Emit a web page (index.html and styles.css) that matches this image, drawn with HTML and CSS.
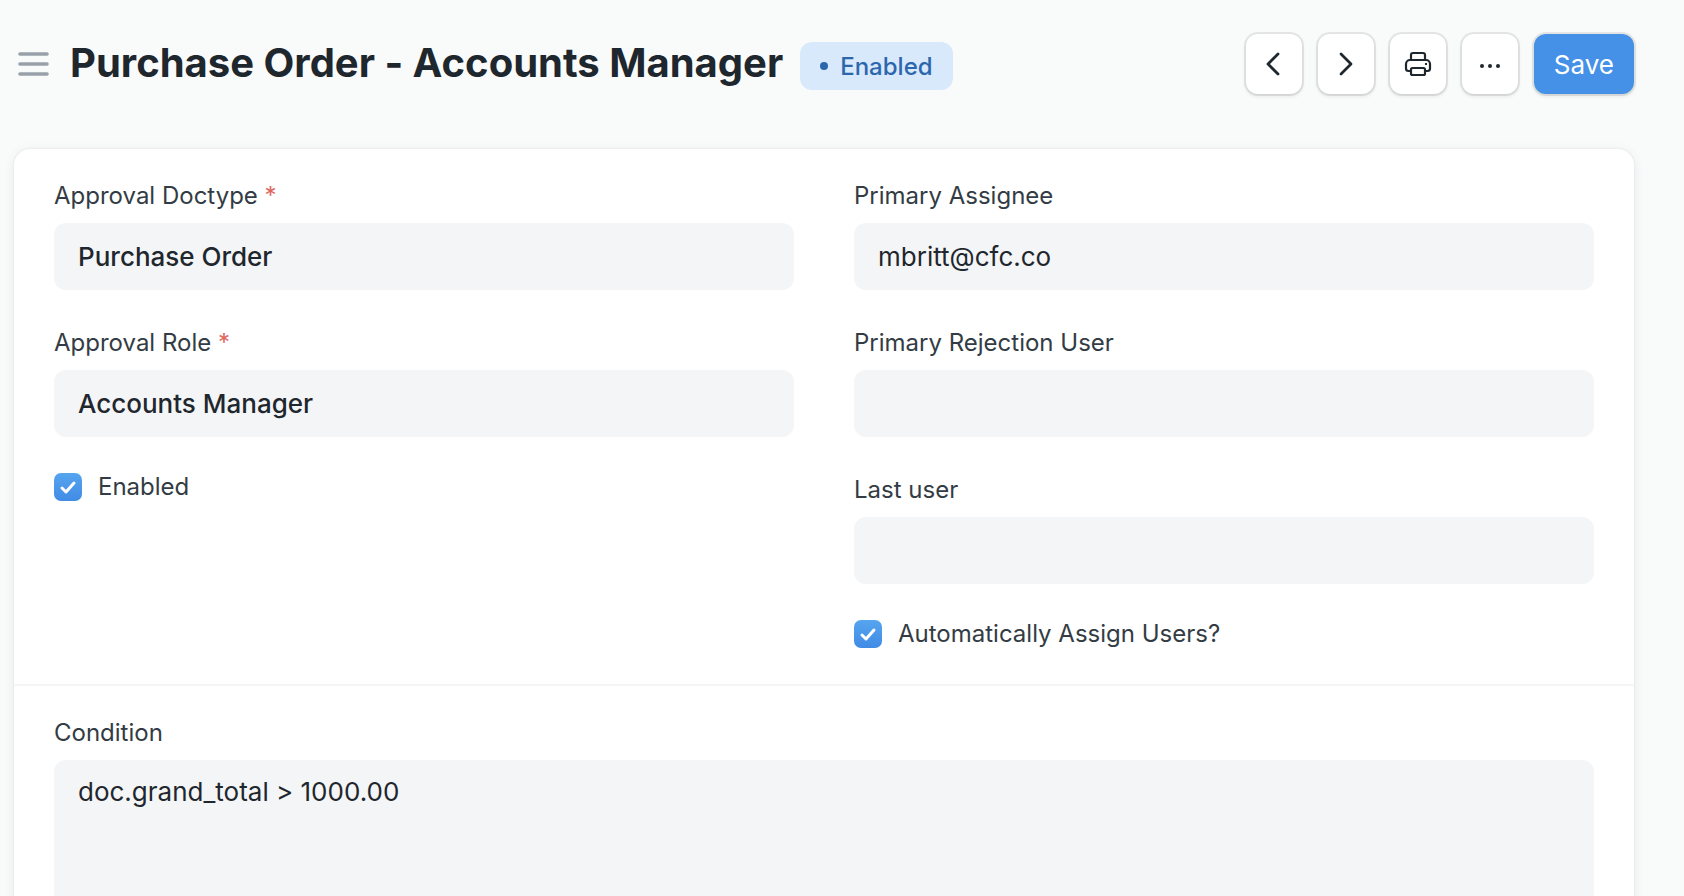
FILE: index.html
```html
<!DOCTYPE html>
<html lang="en">
<head>
<meta charset="utf-8">
<meta name="viewport" content="width=device-width, initial-scale=1">
<title>Purchase Order - Accounts Manager</title>
<link rel="stylesheet" href="styles.css">
</head>
<body>
<header class="page-head">
  <button class="menu-toggle" type="button" aria-label="Toggle sidebar">
    <svg width="31" height="24" viewBox="0 0 31 24" fill="none" stroke="currentColor" stroke-width="3.600" stroke-linecap="round"><path d="M2 2h27M2 12h27M2 22h27"/></svg>
  </button>
  <h1 class="title">Purchase Order - Accounts Manager</h1>
  <span class="badge">Enabled</span>
  <div class="actions">
    <button class="btn" type="button" aria-label="Previous">
      <svg width="32" height="32" viewBox="0 0 32 32" fill="none" stroke="currentColor" stroke-width="2.800" stroke-linecap="round" stroke-linejoin="round"><path d="M20 6L10 16l10 10"/></svg>
    </button>
    <button class="btn" type="button" aria-label="Next">
      <svg width="32" height="32" viewBox="0 0 32 32" fill="none" stroke="currentColor" stroke-width="2.800" stroke-linecap="round" stroke-linejoin="round"><path d="M11 6l10 10-10 10"/></svg>
    </button>
    <button class="btn" type="button" aria-label="Print">
      <svg width="32" height="32" viewBox="0 0 32 32" fill="none" stroke="currentColor" stroke-width="2.200" stroke-linejoin="round"><path d="M9 12V7a2 2 0 0 1 2-2h10a2 2 0 0 1 2 2v5"/><path d="M9 23H6.500a2.500 2.500 0 0 1-2.500-2.500V16a4 4 0 0 1 4-4h16a4 4 0 0 1 4 4v4.500a2.500 2.500 0 0 1-2.500 2.500H23"/><rect x="9" y="20" width="14" height="7" rx="1.500"/><path d="M23 16h2"/></svg>
    </button>
    <button class="btn" type="button" aria-label="More options">
      <svg width="32" height="32" viewBox="0 0 32 32" fill="currentColor"><circle cx="8" cy="18" r="2"/><circle cx="16" cy="18" r="2"/><circle cx="24" cy="18" r="2"/></svg>
    </button>
    <button class="btn btn-primary" type="button">Save</button>
  </div>
</header>
<main>
  <form class="card">
    <section class="section columns">
      <div class="column">
        <div class="field">
          <label class="label" for="doctype">Approval Doctype <span class="required">*</span></label>
          <input class="control strong" id="doctype" type="text" value="Purchase Order">
        </div>
        <div class="field">
          <label class="label" for="role">Approval Role <span class="required">*</span></label>
          <input class="control strong" id="role" type="text" value="Accounts Manager">
        </div>
        <label class="check"><input class="tick" type="checkbox" checked>Enabled</label>
      </div>
      <div class="column">
        <div class="field">
          <label class="label" for="assignee">Primary Assignee</label>
          <input class="control" id="assignee" type="text" value="mbritt@cfc.co">
        </div>
        <div class="field">
          <label class="label" for="rejection">Primary Rejection User</label>
          <input class="control" id="rejection" type="text">
        </div>
        <div class="field">
          <label class="label" for="last-user">Last user</label>
          <input class="control" id="last-user" type="text">
        </div>
        <label class="check"><input class="tick" type="checkbox" checked>Automatically Assign Users?</label>
      </div>
    </section>
    <section class="section">
      <div class="field">
        <label class="label" for="condition">Condition</label>
        <textarea class="control area" id="condition" spellcheck="false">doc.grand_total &gt; 1000.00</textarea>
      </div>
    </section>
  </form>
</main>
</body>
</html>
```
FILE: styles.css
```css
* {
  box-sizing: border-box;
}

body {
  margin: 0;
  height: 100vh;
  overflow: hidden;
  background: #f9fafa;
  color: #1f272e;
  font-family: Inter, "Liberation Sans", sans-serif;
  font-variant-ligatures: no-common-ligatures no-contextual;
}

button,
input,
textarea {
  font: inherit;
  font-variant-ligatures: inherit;
  color: inherit;
}

.page-head {
  display: flex;
  align-items: center;
  padding: 34px 50px 55px 18px;
}

.menu-toggle {
  display: flex;
  margin-right: 21px;
  padding: 0;
  border: 0;
  background: none;
  color: #98a1a9;
}

.title {
  margin: 0;
  padding-bottom: 2px;
  font-size: 40px;
  font-weight: 700;
  line-height: 56px;
  white-space: nowrap;
}

.badge {
  display: flex;
  align-items: center;
  gap: 12px;
  height: 48px;
  margin: 4px 0 0 17px;
  padding: 0 20px;
  border-radius: 12px;
  background: #d8e9fc;
  color: #2c67ad;
  font-size: 24px;
  font-weight: 500;
}

.badge::before {
  content: "";
  width: 8px;
  height: 8px;
  border-radius: 50%;
  background: currentColor;
}

.actions {
  display: flex;
  gap: 16px;
  margin-left: auto;
}

.btn {
  display: flex;
  align-items: center;
  justify-content: center;
  min-width: 56px;
  height: 60px;
  padding: 0 12px;
  border: 0;
  border-radius: 12px;
  background: #fff;
  box-shadow: 0 0 0 2px rgba(0, 0, 0, 0.08), 0 2px 4px rgba(0, 0, 0, 0.1);
}

.btn-primary {
  padding: 0 20px;
  background: #4491e7;
  color: #fff;
  font-size: 26px;
}

.card {
  margin: 0 50px 0 14px;
  border-radius: 16px;
  background: #fff;
  box-shadow: 0 0 2px rgba(0, 0, 0, 0.1), 0 2px 12px rgba(17, 43, 66, 0.08);
}

.section {
  padding: 29px 40px 35px;
}

.section + .section {
  border-top: 2px solid #f4f5f6;
}

.columns {
  display: grid;
  grid-template-columns: 1fr 1fr;
  gap: 60px;
}

.column {
  display: flex;
  flex-direction: column;
  gap: 35px;
}

.field {
  display: flex;
  flex-direction: column;
  gap: 9px;
}

.label,
.check {
  color: #333c44;
  font-size: 24px;
}

.label {
  line-height: 36px;
}

.required {
  color: #e0655c;
}

.control {
  width: 100%;
  height: 67px;
  padding: 0 24px;
  border: 0;
  border-radius: 12px;
  background: #f4f5f6;
  font-size: 26px;
  outline: 0;
}

.strong {
  font-weight: 500;
}

.area {
  height: 600px;
  padding: 12px 24px;
  line-height: 39px;
  resize: none;
}

.check {
  display: flex;
  align-items: center;
  align-self: flex-start;
  gap: 16px;
  line-height: 30px;
}

.tick {
  appearance: none;
  width: 28px;
  height: 28px;
  margin: 0;
  border-radius: 7px;
  background:
    url("data:image/svg+xml,%3Csvg xmlns='http://www.w3.org/2000/svg' viewBox='0 0 28 28' fill='none' stroke='white' stroke-width='3' stroke-linecap='round' stroke-linejoin='round'%3E%3Cpath d='M8 15l4 4 8-9'/%3E%3C/svg%3E"),
    linear-gradient(#56a5ef, #418be5);
}
```
